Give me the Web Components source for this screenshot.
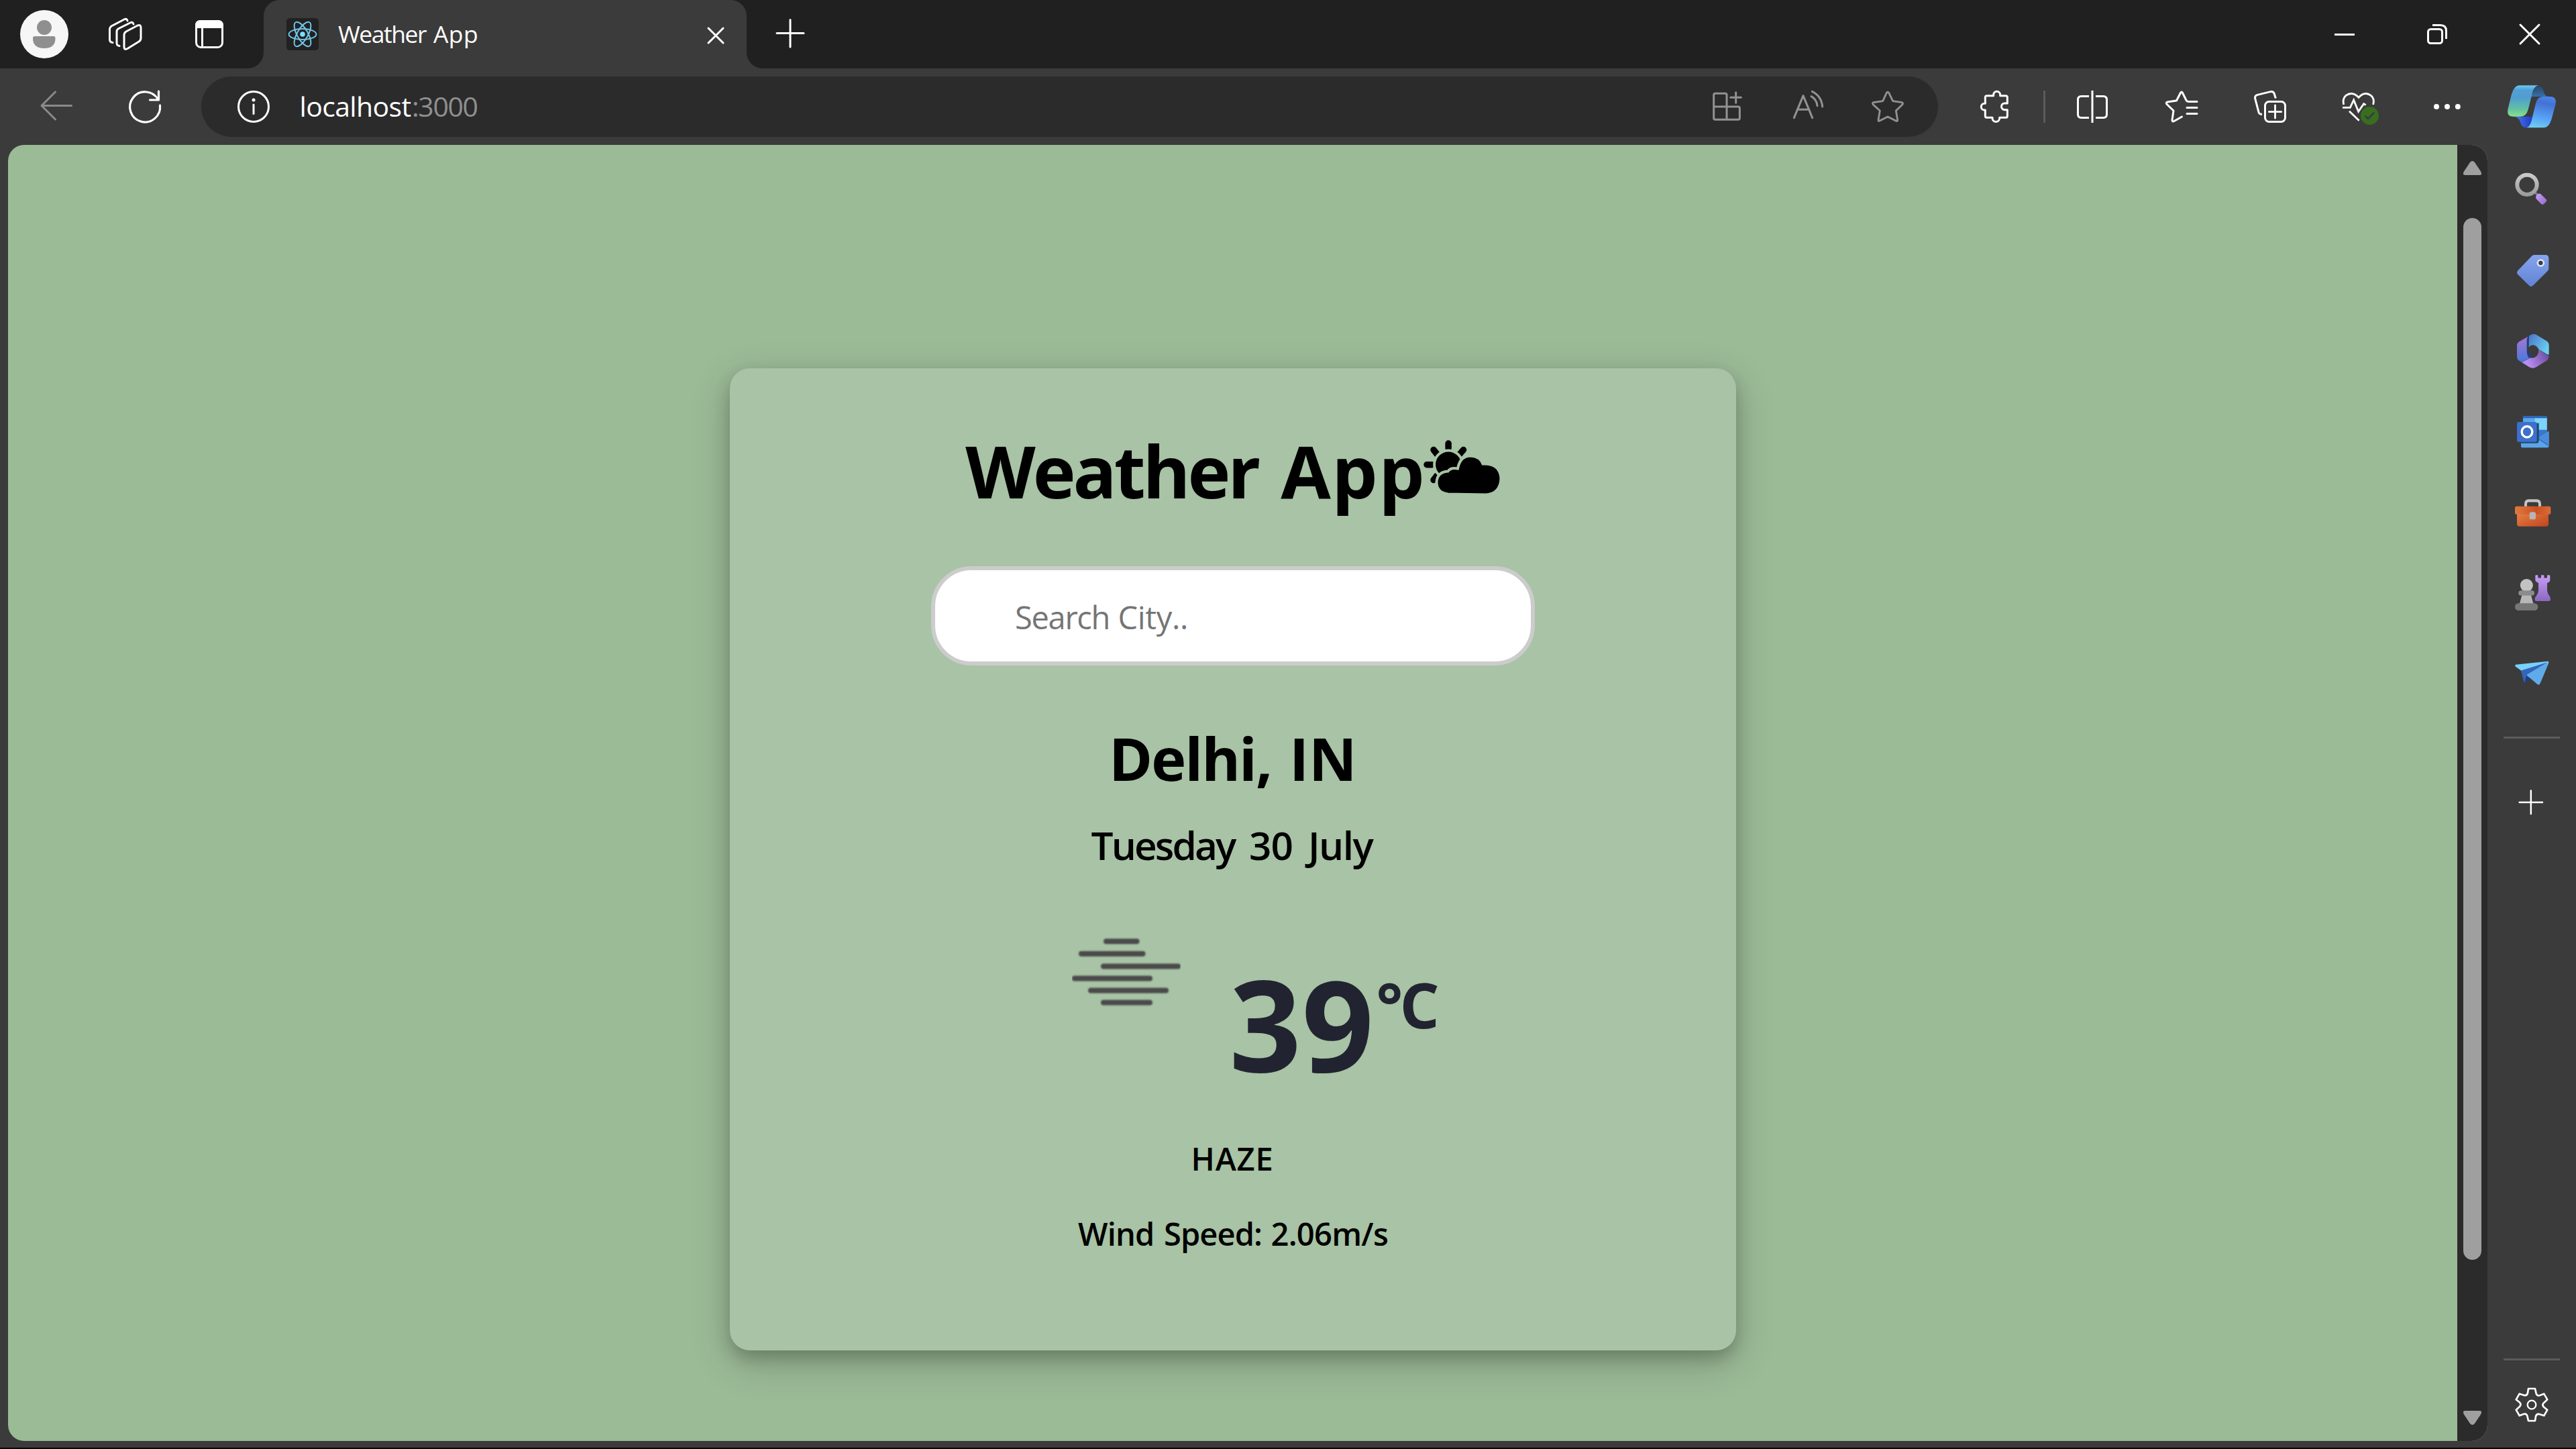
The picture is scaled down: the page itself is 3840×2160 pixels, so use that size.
<!DOCTYPE html>
<html lang="en">
<head>
<meta charset="utf-8">
<title>Weather App</title>
<style>
html,body{margin:0;padding:0;background:#000}
body{width:3840px;height:2160px;overflow:hidden;font-family:"Open Sans","Noto Sans",sans-serif}
</style>
</head>
<body>
<browser-window>
  <tab-strip slot="tabs"></tab-strip>
  <tool-bar slot="toolbar"></tool-bar>
  <weather-page slot="page"></weather-page>
  <side-bar slot="sidebar"></side-bar>
</browser-window>

<script>
// Six-toothed cog outline around (402,702).
function gearPath() {
  const pts = [[-15,-72],[15,-72],[20,-50],[24,-38],[37,-42]];
  let d = '';
  for (let i = 0; i < 6; i++) {
    const a = i * Math.PI / 3, c = Math.cos(a), s = Math.sin(a);
    const p = pts.map(([x, y]) => (402 + x*c - y*s).toFixed(1) + ' ' + (702 + x*s + y*c).toFixed(1));
    d += `${i ? 'L' : 'M'}${p[0]}L${p[1]}L${p[2]}Q${p[3]} ${p[4]}`;
  }
  return d + 'Z';
}

const ICONS = {
  avatar: ['30 15 72 72', `<circle cx="66" cy="51" r="36" fill="#f6f6f6"/><circle cx="66" cy="41" r="11" fill="#8f8f8f"/><path d="M52 54H80Q82.500 54 82.500 57Q82.500 72 66 72Q49 72 49 57Q49 54 52 54Z" fill="#8f8f8f"/>`],
  workspaces: ['150 15 72 72', `<g fill="none" stroke="#fff" stroke-width="3" stroke-linecap="round"><path d="M188 47L205 38Q210 36 210 41V57Q210 60 207 62L190 72.500Q185 75 185 70V52Q185 49 188 47Z"/><path d="M199 36Q198 32 194 34L177 42.500Q174 44 174 47V64Q174 68 178 68.500"/><path d="M190 31Q189 27 185 29L166 39Q163.500 41 163.500 43V59Q163.500 63 168 63.500"/></g>`],
  tabactions: ['276 15 72 72', `<rect x="292.500" y="31.500" width="39" height="39" rx="7" fill="none" stroke="#fff" stroke-width="3"/><path d="M291 42V38Q291 30 299 30H325Q333 30 333 38V42Z" fill="#fff"/><path d="M301.500 42V71" stroke="#fff" stroke-width="3"/>`],
  react: ['426.500 27 48 48', `<rect x="426.500" y="27" width="48" height="48" rx="5" fill="#212121"/><g fill="none" stroke="#6fc3e6" stroke-width="2"><ellipse cx="450.500" cy="51" rx="20.500" ry="8"/><ellipse cx="450.500" cy="51" rx="20.500" ry="8" transform="rotate(60 450.500 51)"/><ellipse cx="450.500" cy="51" rx="20.500" ry="8" transform="rotate(120 450.500 51)"/></g><circle cx="450.500" cy="51" r="3.800" fill="#7fdcff"/>`],
  tabclose: ['1030.500 16.500 72 72', `<path d="M1055.500 41.500L1077.500 63.500M1077.500 41.500L1055.500 63.500" stroke="#fff" stroke-width="3" stroke-linecap="round"/>`],
  newtab: ['1142 14 72 72', `<path d="M1158 49.500H1198M1178 29.500V70" stroke="#fff" stroke-width="3" stroke-linecap="round"/>`],
  minimize: ['3459 15 72 72', `<path d="M3480 51.500H3510" stroke="#fff" stroke-width="3"/>`],
  restore: ['3597 15 72 72', `<g fill="none" stroke="#fff" stroke-width="3"><rect x="3619.500" y="43.500" width="21" height="21" rx="4"/><path d="M3626 37.500H3638Q3646.500 37.500 3646.500 46V58"/></g>`],
  winclose: ['3735 15 72 72', `<path d="M3757 37L3785 65M3785 37L3757 65" stroke="#fff" stroke-width="3" stroke-linecap="round"/>`],
  back: ['48 123 72 72', `<path d="M82.500 137L62 157.500L82.500 178M62 157.500H106.500" fill="none" stroke="#8a8a8a" stroke-width="3" stroke-linecap="round" stroke-linejoin="round"/>`],
  refresh: ['180 123 72 72', `<path d="M238.500 157A22.500 22.500 0 1 1 235.500 148M236.500 136V149H223.500" fill="none" stroke="#fff" stroke-width="3.200" stroke-linecap="round" stroke-linejoin="round"/>`],
  info: ['342 123 72 72', `<circle cx="378" cy="159" r="22.500" fill="none" stroke="#fff" stroke-width="3"/><circle cx="378" cy="149" r="2.500" fill="#fff"/><path d="M378 156V169.500" stroke="#fff" stroke-width="3" stroke-linecap="round"/>`],
  apps: ['54 69 216 216', `<path d="M104 177V125Q104 118 111 118H155Q162 118 162 125V235M104 177V228Q104 235 111 235H213Q220 235 220 228V184Q220 177 213 177H104M179 136H226M203 113V160" fill="none" stroke="#929292" stroke-width="9" stroke-linecap="round"/>`],
  readaloud: ['414 69 216 216', `<path d="M463 227L504 128L545 227M477 190H531M540 131Q564 144 567 173M544 109Q586 130 590 177" fill="none" stroke="#929292" stroke-width="9" stroke-linecap="round" stroke-linejoin="round"/>`],
  star: ['774 69 216 216', `<path d="M877 115Q882 108 887 115L905 152L945 158Q953 161 947 168L919 195L926 237Q925 244 918 240L882 222L846 240Q839 244 840 236L847 195L817 168Q811 160 819 158L860 152Z" fill="none" stroke="#929292" stroke-width="8.500" stroke-linejoin="round"/>`],
  puzzle: ['1242 69 216 216', `<path d="M1355 128H1326Q1318 128 1318 135V163H1314a13.500 14 0 0 0 0 29H1318V218Q1318 226 1326 226H1350V229a16 15.500 0 0 0 32 0V226H1409Q1417 226 1417 218V191H1405a14 14 0 0 1 0 -29H1417V135Q1417 128 1409 128H1385V124a15 15 0 0 0 -30 0Z" fill="none" stroke="#fff" stroke-width="9" stroke-linejoin="round"/>`],
  split: ['3082.500 123 72 72', `<path d="M3113.500 143.500H3102Q3097 143.500 3097 148.500V170.500Q3097 175.500 3102 175.500H3113.500M3123.500 143.500H3135Q3140 143.500 3140 148.500V170.500Q3140 175.500 3135 175.500H3123.500M3118.500 135V183" fill="none" stroke="#fff" stroke-width="3"/>`],
  favorites: ['3216 123 72 72', `<path d="M3275 151.500H3262Q3260 151.500 3259 149.500L3253.300 138Q3252 136 3250.700 138L3244.500 150L3231 152Q3228 153 3230.200 155.500L3240 165L3238 179Q3238 182 3241 180.500L3252.500 174M3260 160.500H3275M3260 169.500H3275" fill="none" stroke="#fff" stroke-width="3" stroke-linecap="round" stroke-linejoin="round"/>`],
  collections: ['84 69 216 216', `<path d="M217 140L211 120Q207 108 194 110L136 124Q122 128 125 141L141 202Q144 212 156 211" fill="none" stroke="#fff" stroke-width="9"/><rect x="169.500" y="154.500" width="90" height="90" rx="18" fill="none" stroke="#fff" stroke-width="9"/><path d="M187 200H242M214.500 171V228" stroke="#fff" stroke-width="8.500" stroke-linecap="round"/>`],
  heart: ['480 69 216 216', `<path d="M521 168Q515 141 531 127Q560 106 588 136Q615 106 643 127Q660 141 653 168M516 181H550L566 147L587 199L611 164L620 170M546 197L590 239" fill="none" stroke="#fff" stroke-width="8.500"/><circle cx="637.500" cy="217.500" r="40.500" fill="#376e1f"/><path d="M619 220L630 231L656 205" fill="none" stroke="#3b3b3b" stroke-width="8" stroke-linecap="round" stroke-linejoin="round"/>`],
  more: ['876 69 216 216', `<g fill="#fff"><circle cx="936" cy="177" r="12"/><circle cx="984" cy="177" r="12"/><circle cx="1031.500" cy="177" r="12"/></g>`],
  copilot: ['1254 69 216 216', `<defs><linearGradient id="a" x2="0" y2="1"><stop stop-color="#66ccf2"/><stop offset=".15" stop-color="#549fd4"/><stop offset=".4" stop-color="#4f9ed0"/><stop offset=".75" stop-color="#62c0a4"/><stop offset="1" stop-color="#8be08c"/></linearGradient><linearGradient id="b" x2="0" y2="1"><stop stop-color="#24476f"/><stop offset="1" stop-color="#3a6ea5"/></linearGradient><linearGradient id="c" x1=".6" x2=".4" y2="1"><stop stop-color="#4c84e6"/><stop offset=".2" stop-color="#4471d3"/><stop offset=".7" stop-color="#59a6f8"/><stop offset="1" stop-color="#6fccee"/></linearGradient><linearGradient id="d"><stop stop-color="#4780ee"/><stop offset="1" stop-color="#2136c4"/></linearGradient></defs><path d="M1384 82Q1408 80 1414 106Q1420 132 1440 132H1358Z" fill="url(#b)"/><path d="M1280 221H1368L1360 245Q1354 270 1334 270Q1318 270 1312 248Q1304 222 1280 221Z" fill="url(#d)"/><path d="M1307 82H1392Q1373 86 1366 112L1346 190Q1338 221 1312 221H1276Q1250 221 1255 190L1272 120Q1284 82 1307 82Z" fill="url(#a)"/><path d="M1412 132H1446Q1474 133 1469 165L1452 228Q1440 271 1415 271H1338Q1354 268 1361 240L1380 163Q1387 132 1412 132Z" fill="url(#c)"/>`],
  search: ['294 78 216 216', `<defs><linearGradient id="a" x2="0" y2="1"><stop stop-color="#c9c9c9"/><stop offset="1" stop-color="#9c9c9c"/></linearGradient><linearGradient id="b" x2="1" y2="1"><stop stop-color="#c9a0f5"/><stop offset="1" stop-color="#9468cb"/></linearGradient></defs><path d="M412 196L432 216" stroke="#7b7b7b" stroke-width="11"/><circle cx="381" cy="166" r="44" fill="none" stroke="url(#a)" stroke-width="18"/><path d="M424 212Q432 202 442 208L466 231Q472 237 466 242L456 253Q450 257 444 252L423 230Q417 222 424 212Z" fill="url(#b)"/>`],
  tag: ['294 438 216 216', `<defs><linearGradient id="a" x2="0" y2="1"><stop stop-color="#86a5ec"/><stop offset="1" stop-color="#6282d6"/></linearGradient></defs><path d="M413 480H463Q478 480 478 495V540Q478 547 473 552L409 616Q399 627 389 616L340 568Q332 559 340 550L402 485Q407 480 413 480Z" fill="url(#a)"/><circle cx="442" cy="516" r="13.500" fill="#3b3b3b" stroke="#dbe6ff" stroke-width="8"/>`],
  office: ['294 798 216 216', `<defs><linearGradient id="a" x2="0" y2="1"><stop stop-color="#a877d6"/><stop offset="1" stop-color="#4878d8"/></linearGradient><linearGradient id="b" x2="1" y2=".6"><stop stop-color="#4c72c8"/><stop offset="1" stop-color="#68d0ef"/></linearGradient><linearGradient id="c" x2="1" y2="-.3"><stop stop-color="#b98df0"/><stop offset="1" stop-color="#5b3f90"/></linearGradient></defs><path d="M381 846L407 834L380 900L408 940L360 962Z" fill="#233f78"/><path d="M386 845L347 867Q336 874 336 886V935Q336 947 346 953L358 960L390 941Q381 931 380 912V862Q380 850 386 845Z" fill="url(#a)"/><path d="M390 842Q407 829 424 838L468 865Q479 872 479 884V922Q479 928 474 926L433 902Q424 884 407 883Q395 884 389 893Z" fill="url(#b)"/><path d="M358 961L396 940Q407 944 420 936Q433 928 433 903L479 932Q479 945 468 953L423 981Q407 992 390 981Z" fill="url(#c)"/>`],
  outlook: ['294 1158 216 216', `<rect x="363" y="1201" width="107" height="100" rx="6" fill="#58a7ea"/><path d="M416 1208H470V1265H416Z" fill="#7cd4fb"/><path d="M363 1210V1207Q363 1201 369 1201H464Q470 1201 470 1207V1210Z" fill="#2c62b8"/><path d="M416 1262H470V1300H416Z" fill="#3976cb"/><path d="M354 1300H430L478 1268V1336Q478 1342 472 1342H360Q354 1342 354 1336Z" fill="#5aa5e8"/><path d="M426 1300L479 1268V1338Z" fill="#4a8ddc"/><path d="M428 1300L478 1332" stroke="#326cc0" stroke-width="4"/><path d="M346 1232H434V1310Q434 1322 424 1322H346Z" fill="#24456f"/><rect x="336" y="1227" width="89" height="89" rx="8" fill="#3c70cc"/><ellipse cx="381" cy="1271" rx="23.500" ry="24.500" fill="none" stroke="#fff" stroke-width="10"/>`],
  toolbox: ['294 100.800 216 201.600', `<defs><linearGradient id="a" x2="1" y2="1"><stop stop-color="#e68446"/><stop offset="1" stop-color="#c2431d"/></linearGradient><linearGradient id="b" x2="1"><stop stop-color="#df7a3e"/><stop offset=".6" stop-color="#cc5022"/><stop offset="1" stop-color="#d96c38"/></linearGradient></defs><path d="M375 184V172Q375 158 388 158H424Q438 158 438 172V184" fill="none" stroke="#c4c4c4" stroke-width="12"/><rect x="336" y="205" width="141" height="60" rx="10" fill="url(#a)"/><rect x="327" y="181" width="160" height="34" rx="8" fill="url(#b)"/><rect x="392" y="205" width="28" height="31" rx="8" fill="#b5b5b5"/>`],
  chess: ['294 436.800 216 201.600', `<defs><linearGradient id="a" x2="0" y2="1"><stop stop-color="#c99cf7"/><stop offset="1" stop-color="#8a68bf"/></linearGradient></defs><path d="M418 472Q418 468 422 468H427Q430 468 430 472V480H444V472Q444 468 447 468H454Q457 468 457 472V480H471V472Q471 468 474 468H479Q484 468 484 472V490Q484 496 476 499L471 502V532Q472 546 484 560Q490 575 480 577H422Q412 575 418 560Q431 546 432 532V502L425 498Q418 495 418 490Z" fill="url(#a)"/><path d="M360 545H397L410 590H347Z" fill="#b7b7b7"/><ellipse cx="379" cy="511" rx="28.500" ry="26.500" fill="#c2c2c2"/><rect x="343" y="533" width="71" height="21" rx="10.500" fill="#8c8c8c"/><rect x="327" y="586" width="103" height="30" rx="15" fill="#777"/>`],
  plane: ['294 772.800 216 201.600', `<path d="M352 864L478 830L377 914Q371 921 368 914Z" fill="#2c5cb0"/><path d="M378 888L396 900L374 919Q368 918 368 910Z" fill="#223c80"/><path d="M378 885L472 831Q480 828 478 836L440 920Q435 930 427 924Z" fill="#5fabea"/><path d="M330 842L474 828Q480 829 475 833L355 867L329 850Q325 845 330 842Z" fill="#79d0f8"/><path d="M355 867L472 832L378 885L371 915Q368 917 367 911Z" fill="#3465b8"/>`],
  add: ['294 1315.200 216 201.600', `<path d="M347 1416H450M398.500 1367V1464" stroke="#fff" stroke-width="7.500" stroke-linecap="round"/>`],
  settings: ['294 594 216 216', `<path d="${gearPath()}" fill="none" stroke="#fff" stroke-width="8" stroke-linejoin="round"/><circle cx="402" cy="702" r="19" fill="none" stroke="#fff" stroke-width="7"/>`],
};

class UiIcon extends HTMLElement {
  constructor() { super(); this.attachShadow({mode: 'open'}); }
  connectedCallback() {
    const [box, art] = ICONS[this.getAttribute('name')];
    this.shadowRoot.innerHTML = `<style>:host{display:block;flex:none;width:72px;height:72px}svg{display:block;width:100%;height:100%;overflow:visible}</style><svg viewBox="${box}" preserveAspectRatio="none" aria-hidden="true">${art}</svg>`;
  }
}
customElements.define('ui-icon', UiIcon);

// A one-line label. `widths` lists the ink width of each word and of the gaps between them.
class FitText extends HTMLElement {
  constructor() {
    super();
    this.attachShadow({mode: 'open'}).innerHTML = `<style>:host{display:block;flex:none}p{margin:0;white-space:pre;font-size:inherit}span{display:inline-block;white-space:pre}</style><p></p>`;
  }
  connectedCallback() {
    const widths = this.getAttribute('widths').split(' ').map(Number);
    const parts = this.getAttribute('text').split(/( )/), cs = getComputedStyle(this);
    const ctx = document.createElement('canvas').getContext('2d');
    ctx.font = `${cs.fontWeight} ${cs.fontSize} ${cs.fontFamily}`;
    this.style.width = widths.reduce((a, b) => a + b, 0) + 'px';
    this.shadowRoot.querySelector('p').replaceChildren(...parts.map((part, i) => {
      const span = document.createElement('span');
      span.textContent = part;
      span.style.width = widths[i] + 'px';
      if (part !== ' ') {
        const m = ctx.measureText(part), left = m.actualBoundingBoxLeft;
        span.style.letterSpacing = (widths[i] - left - m.actualBoundingBoxRight) / (part.length - 1) + 'px';
        span.style.textIndent = left + 'px';
      }
      return span;
    }));
  }
}
customElements.define('fit-text', FitText);

function define(name, html) {
  const t = document.createElement('template');
  t.innerHTML = html;
  customElements.define(name, class extends HTMLElement {
    constructor() {
      super();
      this.attachShadow({mode: 'open'}).appendChild(t.content.cloneNode(true));
    }
  });
}

define('tab-strip', `<style>
:host{display:flex;height:102px;background:#202020;color:#fff;align-items:flex-start}
.left{display:flex;width:393px;height:102px;align-items:center;box-sizing:border-box;padding-left:30px}
.tab{display:flex;align-items:center;width:720px;height:102px;background:#3b3b3b;border-radius:24px 24px 0 0;box-sizing:border-box;padding:0 10.500px 0 33.500px;position:relative}
.tab::before,.tab::after{content:"";position:absolute;bottom:0;width:24px;height:24px}
.tab::before{left:-24px;background:radial-gradient(circle at 0 0,#0000 23.500px,#3b3b3b 24.500px)}
.tab::after{right:-24px;background:radial-gradient(circle at 100% 0,#0000 23.500px,#3b3b3b 24.500px)}
fit-text{font-size:35.500px;line-height:60px;margin:-3px auto 0 29.500px}
.win{display:flex;margin-left:auto;gap:66px;padding:15px 33px 0 0}
</style>
<div class="left"><ui-icon name="avatar"></ui-icon><ui-icon name="workspaces" style="margin-left:48px"></ui-icon><ui-icon name="tabactions" style="margin-left:54px"></ui-icon></div>
<div class="tab"><ui-icon name="react" style="width:48px;height:48px"></ui-icon><fit-text text="Weather App" widths="132 10 65"></fit-text><ui-icon name="tabclose" style="margin-top:3px"></ui-icon></div>
<ui-icon name="newtab" style="margin:14px 0 0 29px"></ui-icon>
<div class="win"><ui-icon name="minimize"></ui-icon><ui-icon name="restore"></ui-icon><ui-icon name="winclose"></ui-icon></div>`);

define('tool-bar', `<style>
:host{display:flex;height:114px;background:#3b3b3b;color:#fff;align-items:center;box-sizing:border-box;padding:0 30px 0 48px}
.pill{display:flex;align-items:center;width:2589px;height:90px;margin-left:48px;background:#2b2b2b;border-radius:45px;box-sizing:border-box;padding:0 39px 0 42px;gap:48px}
.url{display:flex;font-size:41px;line-height:60px;margin:-2px auto 0 -12.500px;gap:4.500px}
.port{color:#8f8f8f}
i{display:block;width:3px;height:48px;background:#5b5b5b;margin:0 34px 0 39.500px}
.group{display:flex;gap:60px;margin-left:61.500px}
</style>
<ui-icon name="back"></ui-icon><ui-icon name="refresh" style="margin-left:60px"></ui-icon>
<div class="pill"><ui-icon name="info"></ui-icon>
<div class="url"><fit-text text="localhost" widths="163"></fit-text><fit-text class="port" text=":3000" widths="94.500"></fit-text></div>
<ui-icon name="apps"></ui-icon><ui-icon name="readaloud"></ui-icon><ui-icon name="star"></ui-icon></div>
<ui-icon name="puzzle" style="margin-left:45px"></ui-icon><i></i><ui-icon name="split"></ui-icon>
<div class="group"><ui-icon name="favorites"></ui-icon><ui-icon name="collections"></ui-icon><ui-icon name="heart"></ui-icon><ui-icon name="more"></ui-icon></div>
<ui-icon name="copilot" style="margin-left:54px"></ui-icon>`);

define('side-bar', `<style>
:host{display:flex;flex-direction:column;align-items:center;width:132px;height:100%;box-sizing:border-box;padding:30px 0 28px}
.apps{display:flex;flex-direction:column;gap:48px}
i{display:block;width:84px;height:3px;background:#5b5b5b}
</style>
<div class="apps"><ui-icon name="search"></ui-icon><ui-icon name="tag"></ui-icon><ui-icon name="office"></ui-icon><ui-icon name="outlook"></ui-icon><ui-icon name="toolbox"></ui-icon><ui-icon name="chess"></ui-icon><ui-icon name="plane"></ui-icon></div>
<i style="margin-top:60px"></i><ui-icon name="add" style="margin-top:59px"></ui-icon>
<i style="margin-top:auto"></i><ui-icon name="settings" style="margin-top:30px"></ui-icon>`);

define('scroll-bar', `<style>
:host{display:flex;flex-direction:column;align-items:center;width:45px;height:100%;box-sizing:border-box;background:#2b2b2b;padding:24px 0}
svg{display:block;width:27px;height:21px}
.thumb{width:27px;height:1553px;border-radius:13.500px;background:#9f9f9f;margin-top:64px}
</style>
<svg viewBox="0 0 27 21"><path d="M10 2Q13.500 -2 17 2L26 15.500Q29 21 24 21H3Q-2 21 1 15.500Z" fill="#9f9f9f"/></svg>
<div class="thumb"></div>
<svg viewBox="0 0 27 21" style="margin-top:auto"><path d="M10 19Q13.500 23 17 19L26 5.500Q29 0 24 0H3Q-2 0 1 5.500Z" fill="#9f9f9f"/></svg>`);

define('search-field', `<style>
:host{display:flex;width:900px;height:148px;box-sizing:border-box;border:6px solid #ccc;border-radius:60px;background:#fff;color:#757575;padding:38px 0 0 121.500px;font-size:47px;line-height:64px}
</style><slot></slot>`);

define('weather-card', `<style>
:host{display:flex;flex-direction:column;align-items:center;width:1500px;height:1464px;box-sizing:border-box;padding-top:78px;background:#a8c3a5;border-radius:30px;color:#000;box-shadow:0 12px 24px rgba(0,0,0,.2),0 18px 60px rgba(0,0,0,.19)}
.title{display:flex;height:150px;align-items:flex-start}
.title fit-text{font-size:108px;font-weight:700;line-height:150px}
.title svg{display:block;width:114px;height:80px;margin:28.500px 0 0 2.500px}
search-field{margin-top:67px}
.city{font-size:88px;font-weight:700;line-height:120px;margin-top:78px}
.date{font-size:58.500px;font-weight:600;line-height:80px;margin-top:29px}
.temp{display:flex;align-items:flex-start;height:256px;margin-top:97px;color:#212430;padding-left:65px}
.temp svg{display:block;width:162px;height:110px}
.num{font-size:188px;font-weight:700;line-height:256px;margin:1px 0 0 80px}
.unit{font-size:93px;font-weight:700;line-height:120px;margin:41px 0 0 13px}
.sky{font-size:47px;font-weight:600;line-height:64px;margin-top:43px}
.wind{font-size:47px;font-weight:600;line-height:64px;margin-top:48px}
</style>
<div class="title"><fit-text text="Weather App" widths="438 32 210"></fit-text>
<svg viewBox="2123.500 655.500 114 80"><g stroke="#000" stroke-linecap="round" fill="none" stroke-width="9.500"><path d="M2160.600 660.500V667.500M2138.500 670L2144 677M2183 670L2177 677M2128.500 692.200H2136M2138.500 715L2143 709"/></g><g stroke="#a8c3a5" stroke-width="4"><circle cx="2160.600" cy="692" r="21"/><path d="M2160 736Q2143 734 2143 718Q2144 703 2160 702Q2164 696 2174.500 698Q2178 679 2194 679Q2208 680 2212 691Q2238 690 2239 713Q2238 735 2217 737Z"/></g></svg></div>
<search-field><fit-text text="Search City.." widths="136.500 17 99.500"></fit-text></search-field>
<fit-text class="city" text="Delhi, IN" widths="232 37 86"></fit-text>
<fit-text class="date" text="Tuesday 30 July" widths="217.500 20 61.500 19.500 103.500"></fit-text>
<div class="temp">
<svg viewBox="1598 1396 162 110"><g stroke="#4b4a4b" stroke-width="8" stroke-linecap="round" style="filter:blur(1px)"><path d="M1649 1403.300H1694.500M1612 1421.700H1703.500M1645 1440.500H1756M1602 1458.500H1714M1626 1476.500H1738M1645 1494.500H1714"/></g></svg>
<fit-text class="num" text="39" widths="202"></fit-text><fit-text class="unit" text="°C" widths="88"></fit-text></div>
<fit-text class="sky" text="HAZE" widths="116"></fit-text>
<fit-text class="wind" text="Wind Speed: 2.06m/s" widths="111 19 142 17.500 171.500"></fit-text>`);

define('weather-page', `<style>
:host{display:flex;width:3696px;height:1932px;background:#9bba96;border-radius:24px;overflow:hidden}
main{display:flex;flex:1;justify-content:center;align-items:flex-start;padding-top:333px;box-sizing:border-box}
</style><main><weather-card></weather-card></main><scroll-bar></scroll-bar>`);

define('browser-window', `<style>
:host{display:flex;flex-direction:column;width:3840px;height:2158px;background:#3b3b3b}
.body{display:flex;height:1942px;padding-left:12px}
</style>
<slot name="tabs"></slot><slot name="toolbar"></slot>
<div class="body"><slot name="page"></slot><slot name="sidebar"></slot></div>`);
</script>
</body>
</html>
